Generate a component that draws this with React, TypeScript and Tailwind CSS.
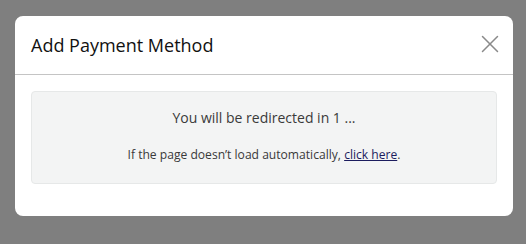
import { X } from "lucide-react";

export default function App() {
  return (
    <div
      className="w-[526px] h-[244px] bg-[#7f7f7f] pt-4 pl-[15px]"
      style={{ fontFamily: '"Open Sans", sans-serif' }}
    >
      <div className="w-[498px] h-[200px] bg-white rounded-lg flex flex-col">
        <div className="h-[59px] flex items-center justify-between pl-4 pr-2 border-b border-[#c4c4c4]">
          <h2 className="text-[18px] text-[#111] leading-none">Add Payment Method</h2>
          <X size={30} strokeWidth={1.2} className="text-[#8a8a8a] -mt-[2px]" />
        </div>
        <div className="p-4">
          <div className="h-[93px] bg-[#f3f4f4] border border-[#e6e8e8] rounded flex flex-col items-center pt-4">
            <p className="text-[14px] text-[#3a3a3a] leading-5">You will be redirected in 1 ...</p>
            <p className="text-[12.1px] text-[#3a3a3a] leading-4 mt-[19px]">
              If the page doesn’t load automatically,{" "}
              <a href="#" className="text-[#1c1c5e] underline">click here</a>.
            </p>
          </div>
        </div>
      </div>
    </div>
  );
}
